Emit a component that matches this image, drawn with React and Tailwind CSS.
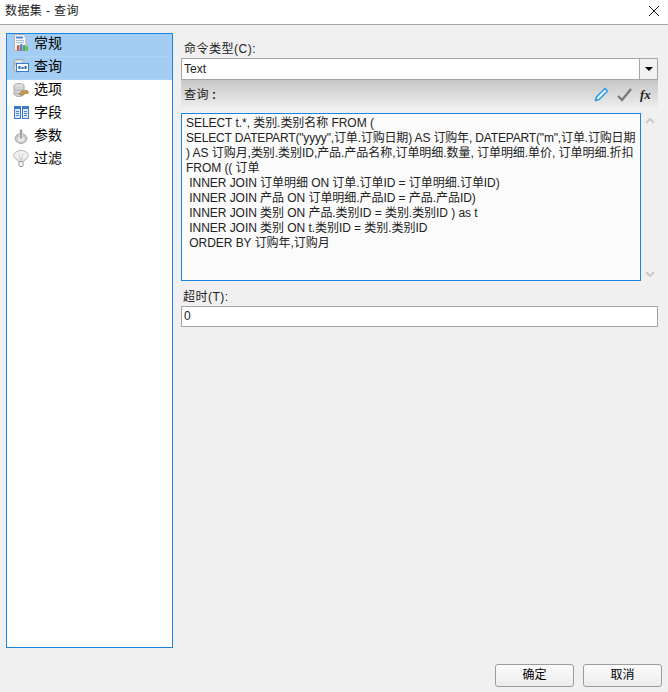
const font = { fontFamily: '"Liberation Sans", "Noto Sans CJK SC", sans-serif' }

const ChartIcon = () => (
  <svg width="16" height="18" viewBox="0 0 16 18">
    <path d="M1.5.5h9l2.5 3v13h-11.500z" fill="#f4f5f7" stroke="#b0b3b8" />
    <rect x="3" y="2.500" width="7" height="2" fill="#4a8ddc" />
    <rect x="3" y="6" width="8" height="1" fill="#a9bcd6" />
    <rect x="3" y="8" width="8" height="1" fill="#a9bcd6" />
    <rect x="4" y="11" width="2.500" height="6" rx="1" fill="#d9593e" />
    <rect x="7" y="10" width="2.500" height="7" rx="1" fill="#4a82d8" />
    <rect x="10" y="11" width="2.500" height="6" rx="1" fill="#4aa84a" />
    <rect x="13" y="12" width="2" height="5" rx="1" fill="#5cbc5c" />
  </svg>
)

const QueryIcon = () => (
  <svg width="16" height="14" viewBox="0 0 16 14">
    <ellipse cx="6" cy="2.500" rx="5" ry="2" fill="#e4e6e9" stroke="#9b9fa6" />
    <path d="M1 3v8c0 1 2 2 4 2" fill="#dcdfe3" stroke="#9b9fa6" />
    <rect x="3.500" y="4.500" width="12" height="8" fill="#fff" stroke="#2f7fd0" />
    <rect x="5.500" y="7" width="2" height="3" fill="#2463b0" />
    <rect x="8.500" y="8" width="2" height="2" fill="#2463b0" />
    <rect x="11.500" y="7" width="2" height="3" fill="#2463b0" />
  </svg>
)

const OptionIcon = () => (
  <svg width="16" height="14" viewBox="0 0 16 14">
    <ellipse cx="6" cy="2.800" rx="5" ry="2.200" fill="#e2e2e2" stroke="#a8a8a8" />
    <path d="M1 3v8c0 1.200 2.200 2.500 5 2.500s5-1.300 5-2.500V3" fill="#d6d6d6" stroke="#a8a8a8" />
    <path d="M1 6.500c1.500 1.200 8.500 1.200 10 0M1 9.500c1.500 1.200 4 1.200 5 1" fill="none" stroke="#ababab" />
    <path d="M6 11l3-3 2 .5 1.500-1.500 3 1.500-.5 2h-3l-2 1.500H7z" fill="#cf9a4a" stroke="#85602a" strokeWidth=".5" />
  </svg>
)

const FieldIcon = () => (
  <svg width="15" height="13" viewBox="0 0 15 13">
    <rect x=".5" y=".5" width="6" height="12" fill="#dce8f8" stroke="#3f78c8" />
    <rect x="8.500" y=".5" width="6" height="12" fill="#dce8f8" stroke="#3f78c8" />
    <rect x="1" y="1" width="5" height="2" fill="#3f78c8" />
    <rect x="9" y="1" width="5" height="2" fill="#3f78c8" />
    <path d="M2 5.500h3M2 7.500h3M2 9.500h3M10 5.500h3M10 7.500h3M10 9.500h3" stroke="#4f86d2" />
  </svg>
)

const ParamIcon = () => (
  <svg width="14" height="16" viewBox="0 0 14 16">
    <ellipse cx="7" cy="10.500" rx="6" ry="5" fill="#c8c8c8" stroke="#b0b0b0" />
    <ellipse cx="7" cy="11" rx="3.500" ry="2.600" fill="#ebebeb" />
    <rect x="5.500" y="1" width="3" height="10" rx="1.500" fill="#a2a2a2" stroke="#f2f2f2" strokeWidth=".6" />
  </svg>
)

const FilterIcon = () => (
  <svg width="16" height="17" viewBox="0 0 16 17">
    <ellipse cx="8" cy="5.500" rx="7.300" ry="5" fill="#f0f0f0" stroke="#b5b5b5" />
    <path d="M2 8l4 4h4l4-4" fill="#e4e4e4" stroke="#b5b5b5" />
    <rect x="6" y="11.500" width="4" height="5" rx="1" fill="#f6f6f6" stroke="#9a9a9a" />
    <path d="M6 4l2 7 2-7" fill="none" stroke="#cfcfcf" />
  </svg>
)

const navItems = [
  { label: '常规', icon: <ChartIcon />, active: true },
  { label: '查询', icon: <QueryIcon />, active: true },
  { label: '选项', icon: <OptionIcon /> },
  { label: '字段', icon: <FieldIcon /> },
  { label: '参数', icon: <ParamIcon /> },
  { label: '过滤', icon: <FilterIcon /> },
]

const sqlLines = [
  { text: 'SELECT t.*, 类别.类别名称 FROM (' },
  { text: 'SELECT DATEPART("yyyy",订单.订购日期) AS 订购年, DATEPART("m",订单.订购日期', tight: true },
  { text: ') AS 订购月,类别.类别ID,产品.产品名称,订单明细.数量, 订单明细.单价, 订单明细.折扣' },
  { text: 'FROM (( 订单' },
  { text: ' INNER JOIN 订单明细 ON 订单.订单ID = 订单明细.订单ID)' },
  { text: ' INNER JOIN 产品 ON 订单明细.产品ID = 产品.产品ID)' },
  { text: ' INNER JOIN 类别 ON 产品.类别ID = 类别.类别ID ) as t' },
  { text: ' INNER JOIN 类别 ON t.类别ID = 类别.类别ID' },
  { text: ' ORDER BY 订购年,订购月' },
]

const App = () => {
  return (
    <div style={font} className="w-[668px] h-[692px] flex flex-col bg-[#f0f0f0] text-black overflow-hidden">
      <div className="h-[25px] shrink-0 bg-white border-b border-[#a6a6a6] flex items-center justify-between pl-[5px] pr-[8px]">
        <span className="text-[12px] tracking-[0.4px] text-[#222] mb-[2px]">数据集 - 查询</span>
        <svg width="12" height="12" viewBox="0 0 12 12" className="mb-[3px]">
          <path d="M1 1l10 10M11 1L1 11" stroke="#222" strokeWidth="1" fill="none" />
        </svg>
      </div>

      <div className="flex flex-1 min-h-0 pt-[8px] pl-[6px]">
        <div className="w-[167px] h-[615px] border border-[#1a84e0] bg-white shrink-0">
          {navItems.map((item) => (
            <div
              key={item.label}
              className={`h-[23px] flex items-center ${item.active ? 'bg-[#a3cdf2] border-b border-[#aed3f4]' : ''}`}
            >
              <span className="w-[26px] flex justify-center pl-[2px] mb-[4px]">{item.icon}</span>
              <span className="text-[14px] leading-[20px] ml-[1px] mb-[5px]">{item.label}</span>
            </div>
          ))}
        </div>

        <div className="w-[477px] ml-[8px] shrink-0 flex flex-col">
          <label className="text-[12px] leading-[14px] h-[14px] mt-[9px] ml-[3px] tracking-[0.5px] text-[#222]">命令类型(C):</label>
          <div className="h-[22px] mt-[2px] bg-white border border-[#a5a5a5] flex">
            <span className="flex-1 text-[12px] leading-[20px] pl-[2px] text-[#222]">Text</span>
            <span className="w-[18px] border-l border-[#a5a5a5] bg-[#f1f1f1] flex items-center justify-center">
              <svg width="8" height="4" viewBox="0 0 8 4"><path d="M0 0h8L4 4z" fill="#000" /></svg>
            </span>
          </div>
          <div className="h-[29px] bg-gradient-to-b from-[#c6c6c6] to-[#f0f0f0] flex items-center justify-between">
            <span className="text-[12px] ml-[3px] tracking-[0.5px] text-[#222]">查询<b className="ml-[3px]">:</b></span>
            <div className="flex items-center gap-[8px] mr-[5px]">
              <svg width="15" height="15" viewBox="0 0 15 15">
                <path d="M11 1.500l2.500 2.500L5 12.500 1.500 13.500 2.500 10z" fill="#fff" stroke="#2f9be8" strokeWidth="1.700" strokeLinejoin="round" />
              </svg>
              <svg width="15" height="14" viewBox="0 0 15 14">
                <path d="M1 8l4 4 9-11" fill="none" stroke="#7b7b7b" strokeWidth="2.400" />
              </svg>
              <span className="w-[13px] text-[13px] leading-[14px] italic font-bold text-[#222]" style={{ fontFamily: '"Liberation Serif", serif' }}>fx</span>
            </div>
          </div>
          <div className="flex">
            <div className="w-[460px] h-[168px] mt-[4px] bg-[#fbfbfb] border border-[#1a84e0] pl-[4px] pt-[2px] text-[12px] leading-[15px] text-[#222] whitespace-pre overflow-hidden">
              {sqlLines.map((line) => (
                <div key={line.text} className={line.tight ? 'tracking-[-0.16px]' : 'tracking-[-0.05px]'}>{line.text}</div>
              ))}
            </div>
            <div className="w-[17px] h-[168px] mt-[4px] flex flex-col items-center justify-between pt-[5px] pb-[4px]">
              <svg width="8" height="6" viewBox="0 0 8 6"><path d="M0 5l4-4 4 4" fill="none" stroke="#c8c8c8" strokeWidth="2" /></svg>
              <svg width="8" height="6" viewBox="0 0 8 6"><path d="M0 1l4 4 4-4" fill="none" stroke="#c8c8c8" strokeWidth="2" /></svg>
            </div>
          </div>
          <label className="text-[12px] leading-[14px] h-[14px] mt-[9px] ml-[2px] tracking-[0.5px] text-[#222]">超时(T):</label>
          <div className="h-[21px] mt-[2px] bg-white border border-[#a5a5a5] text-[12px] leading-[19px] pl-[2px] text-[#222]">0</div>
        </div>
      </div>

      <div className="h-[29px] shrink-0 flex justify-end gap-[9px] pr-[6px] pt-[1px]">
        <button className="w-[79px] h-[23px] rounded-[3px] border border-[#9c9c9c] bg-gradient-to-b from-[#fbfbfb] to-[#ececec] text-[12px] leading-[18px] pb-[2px]">确定</button>
        <button className="w-[79px] h-[23px] rounded-[3px] border border-[#9c9c9c] bg-gradient-to-b from-[#fbfbfb] to-[#ececec] text-[12px] leading-[18px] pb-[2px]">取消</button>
      </div>
    </div>
  )
}

export default App
